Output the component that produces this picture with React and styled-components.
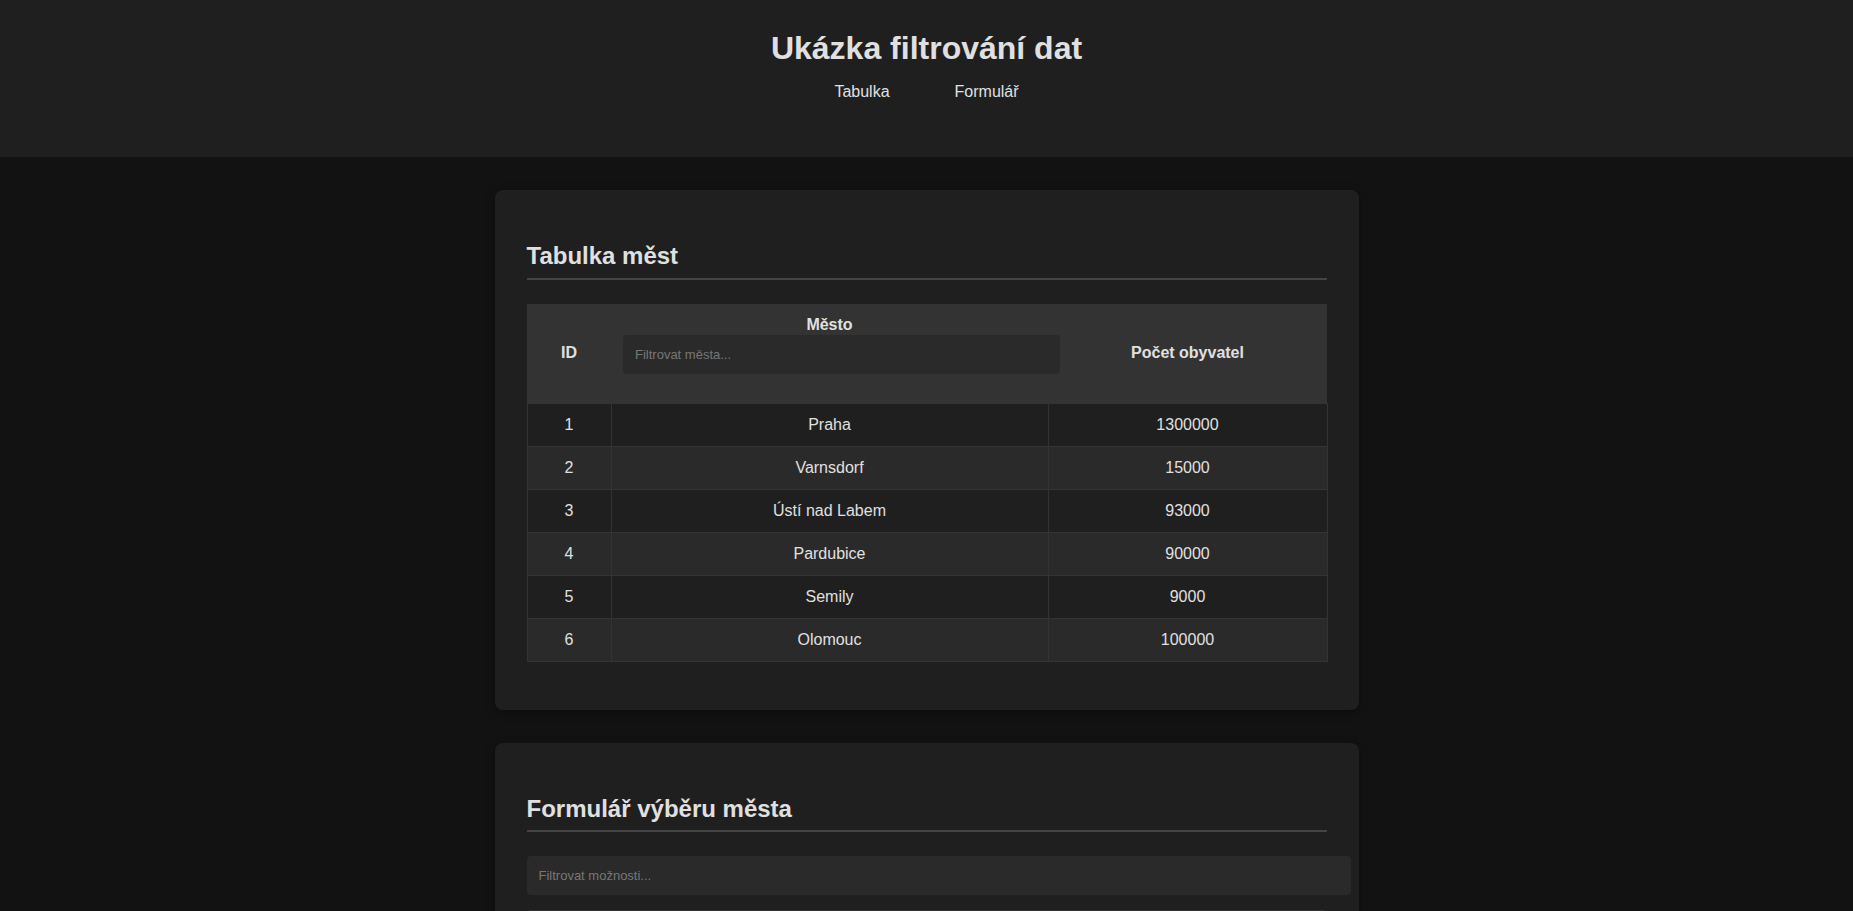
import React, { useState } from 'react';
import styled, { createGlobalStyle } from 'styled-components';

const cities = [
  { id: 1, name: 'Praha', population: 1300000 },
  { id: 2, name: 'Varnsdorf', population: 15000 },
  { id: 3, name: 'Ústí nad Labem', population: 93000 },
  { id: 4, name: 'Pardubice', population: 90000 },
  { id: 5, name: 'Semily', population: 9000 },
  { id: 6, name: 'Olomouc', population: 100000 },
];

const GlobalStyle = createGlobalStyle`
  body {
    margin: 0;
    background: #121212;
    color: #e0e0e0;
    font-family: "Liberation Sans", Arial, sans-serif;
  }
`;

const Header = styled.header`
  box-sizing: border-box;
  height: 157px;
  padding-top: 30px;
  background: #1f1f1f;
  text-align: center;
  h1 {
    margin: 0 0 16px;
    font-size: 32px;
    line-height: 37px;
    color: #e0e0e0;
  }
`;

const Nav = styled.nav`
  display: flex;
  justify-content: center;
  gap: 65px;
  a {
    color: #e0e0e0;
    text-decoration: none;
    font-size: 16px;
    line-height: 18px;
  }
`;

const Main = styled.main`
  display: flex;
  flex-direction: column;
  align-items: center;
  gap: 33px;
  padding: 33px 0 40px;
`;

const Card = styled.section`
  width: 800px;
  padding: 32px;
  background: #1f1f1f;
  border-radius: 8px;
  box-shadow: 0 2px 10px rgba(0, 0, 0, 0.35);
  h2 {
    margin: 20px 0 24px;
    padding-bottom: 8px;
    border-bottom: 2px solid #444;
    font-size: 24px;
    line-height: 27.6px;
    color: #e0e0e0;
  }
`;

const Table = styled.table`
  width: 800px;
  table-layout: fixed;
  border-collapse: collapse;
  margin-bottom: 16px;
  thead tr {
    background: #333;
  }
  th {
    padding: 12px;
    font-size: 16px;
    line-height: 18px;
    font-weight: bold;
    color: #e0e0e0;
    vertical-align: middle;
  }
  td {
    border: 1px solid #333;
    padding: 12px;
    font-size: 16px;
    line-height: 18px;
    text-align: center;
    color: #e0e0e0;
  }
  tbody tr:nth-child(even) td {
    background: #2a2a2a;
  }
`;

const FilterInput = styled.input`
  position: relative;
  display: block;
  box-sizing: content-box;
  width: 100%;
  padding: 12px;
  border: none;
  border-radius: 4px;
  background: #2a2a2a;
  color: #e0e0e0;
  font-family: "Liberation Sans", Arial, sans-serif;
  font-size: 13px;
  line-height: 15px;
  margin: ${(p) => p.$margin || '0'};
  outline: none;
  &::placeholder {
    color: #777;
  }
`;

const OptionList = styled.div`
  margin-top: 15px;
  border: 1px solid #333;
  border-radius: 4px;
`;

const Option = styled.div`
  padding: 12px;
  font-size: 16px;
  line-height: 18px;
  border-bottom: 1px solid #333;
  &:last-child {
    border-bottom: none;
  }
`;

export default function App() {
  const [cityFilter, setCityFilter] = useState('');
  const [optionFilter, setOptionFilter] = useState('');

  const shown = cities.filter((c) =>
    c.name.toLowerCase().includes(cityFilter.toLowerCase())
  );
  const options = cities.filter((c) =>
    c.name.toLowerCase().includes(optionFilter.toLowerCase())
  );

  return (
    <>
      <GlobalStyle />
      <Header>
        <h1>Ukázka filtrování dat</h1>
        <Nav>
          <a href="#tabulka">Tabulka</a>
          <a href="#formular">Formulář</a>
        </Nav>
      </Header>
      <Main>
        <Card id="tabulka">
          <h2>Tabulka měst</h2>
          <Table>
            <colgroup>
              <col style={{ width: 84 }} />
              <col style={{ width: 437 }} />
              <col style={{ width: 279 }} />
            </colgroup>
            <thead>
              <tr>
                <th>ID</th>
                <th>
                  Město
                  <FilterInput
                    $margin="1px 0 17px"
                    placeholder="Filtrovat města..."
                    value={cityFilter}
                    onChange={(e) => setCityFilter(e.target.value)}
                  />
                </th>
                <th>Počet obyvatel</th>
              </tr>
            </thead>
            <tbody>
              {shown.map((c) => (
                <tr key={c.id}>
                  <td>{c.id}</td>
                  <td>{c.name}</td>
                  <td>{c.population}</td>
                </tr>
              ))}
            </tbody>
          </Table>
        </Card>
        <Card id="formular">
          <h2>Formulář výběru města</h2>
          <FilterInput
            placeholder="Filtrovat možnosti..."
            value={optionFilter}
            onChange={(e) => setOptionFilter(e.target.value)}
          />
          <OptionList>
            {options.map((c) => (
              <Option key={c.id}>{c.name}</Option>
            ))}
          </OptionList>
        </Card>
      </Main>
    </>
  );
}
